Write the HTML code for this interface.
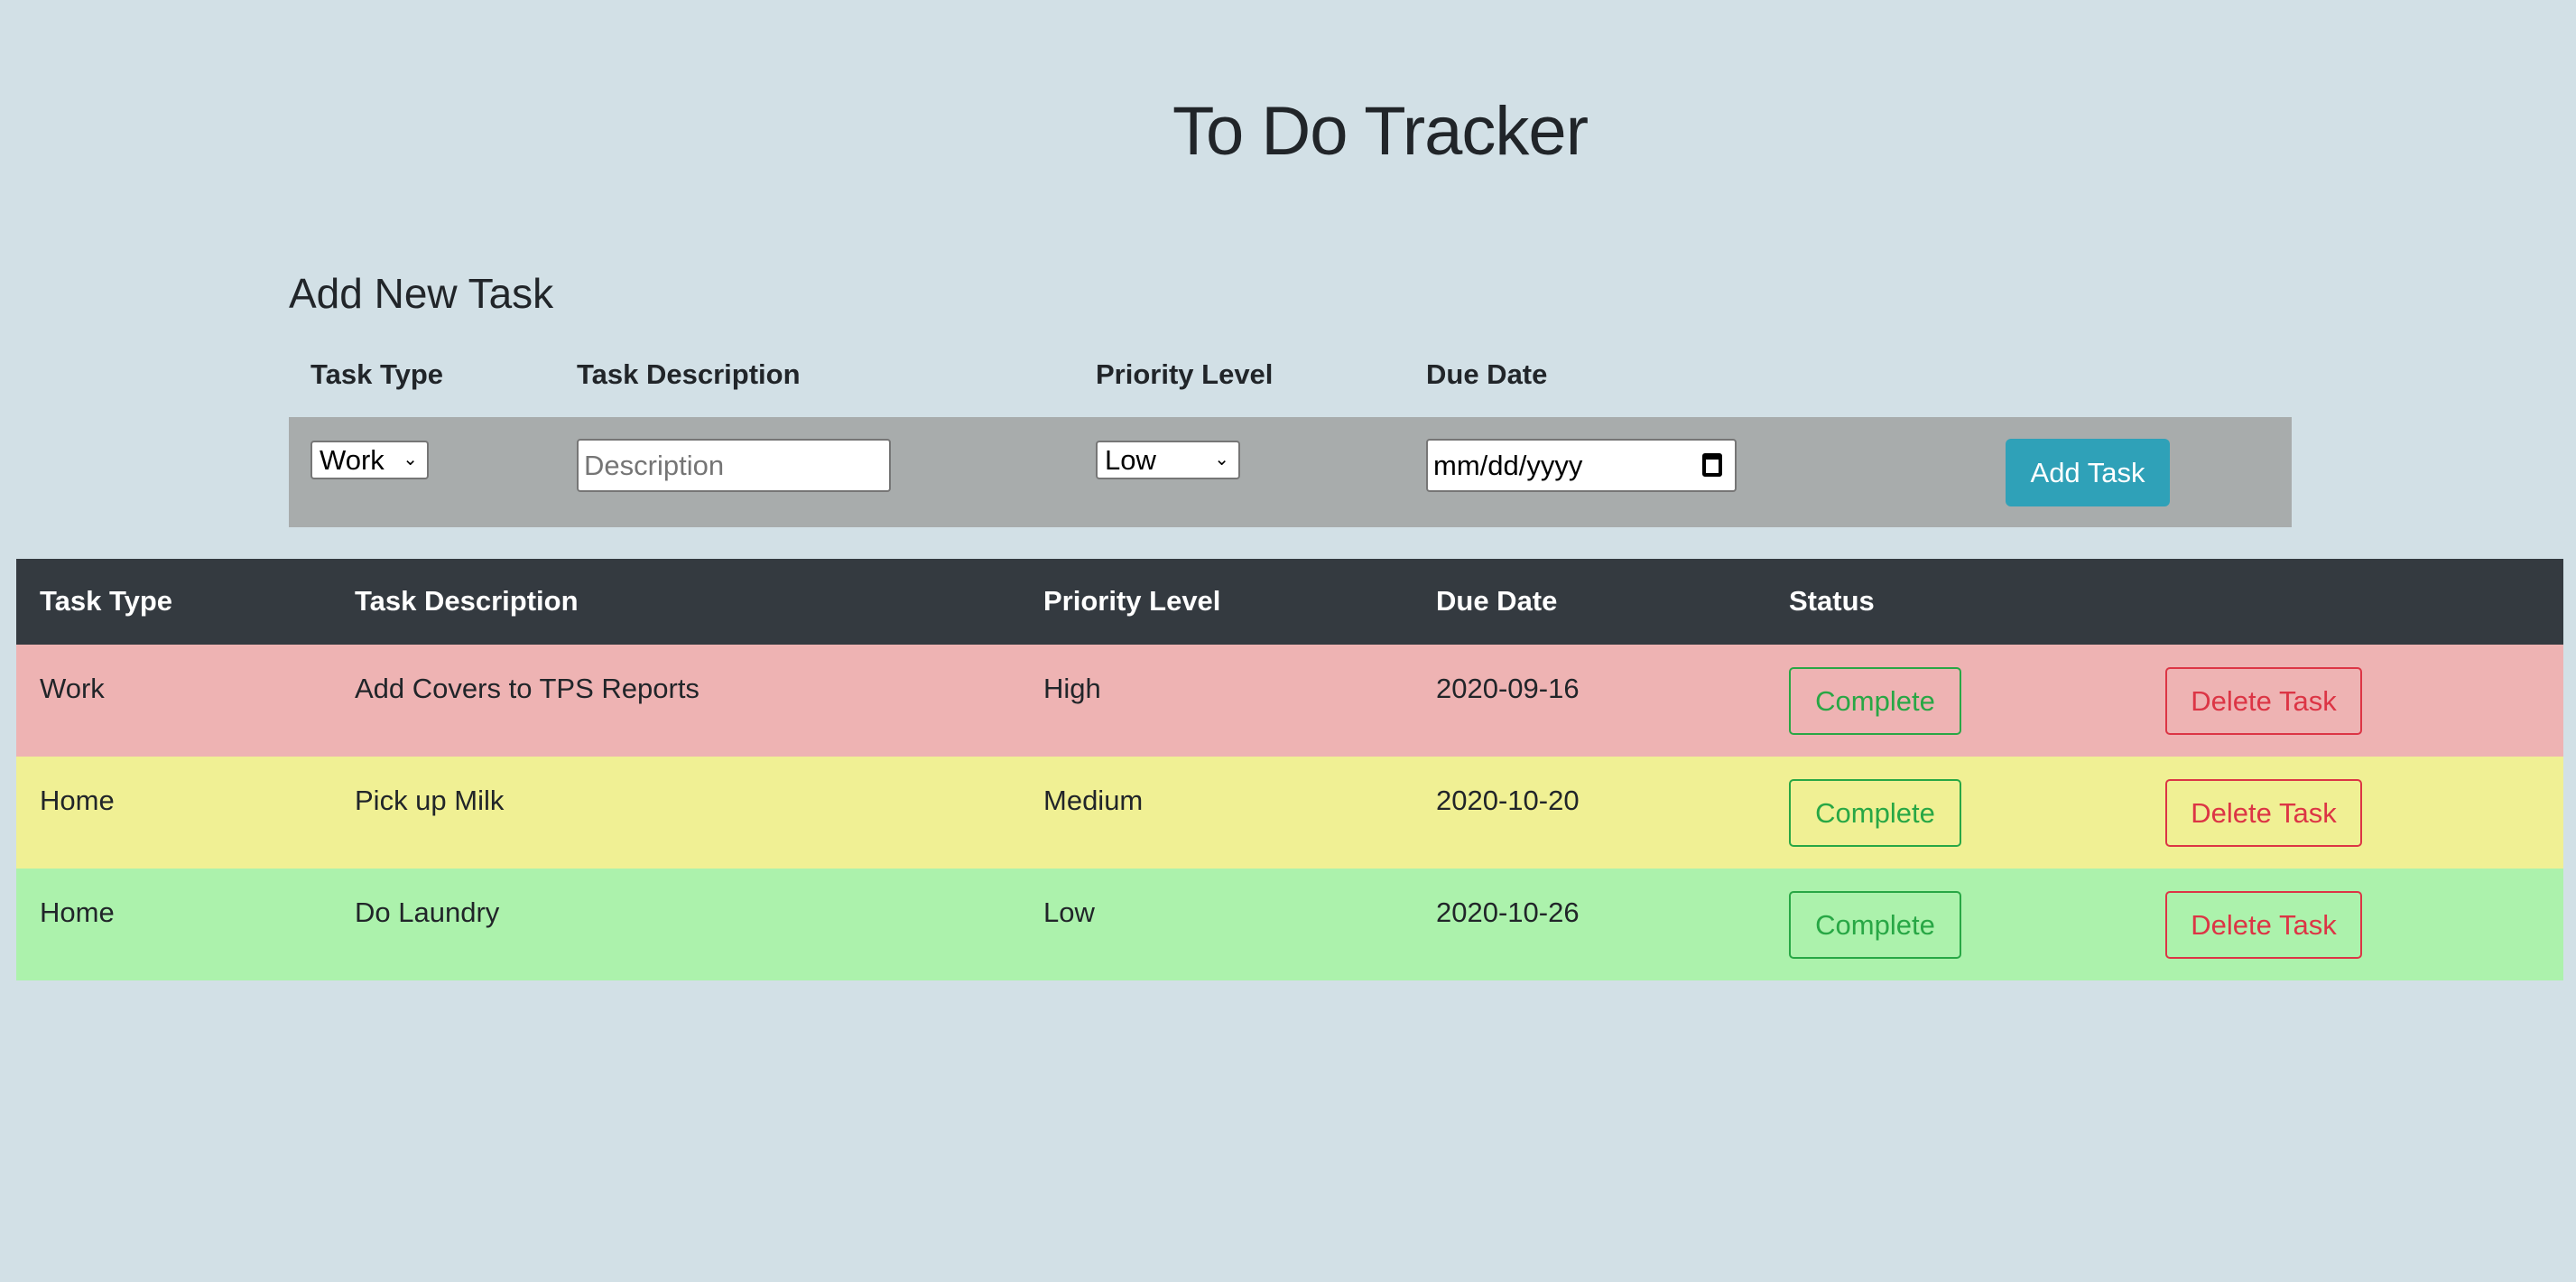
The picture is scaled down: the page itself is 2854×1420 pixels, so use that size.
<!DOCTYPE html>
<html><head><style>
body{margin:0;width:2854px;height:1420px;background:#d2e0e6;font-family:"Liberation Sans",sans-serif;color:#212529;position:relative;overflow:hidden}
.a{position:absolute;white-space:nowrap}
h1{position:absolute;margin:0;left:0;width:3058px;text-align:center;top:108px;font-size:76px;font-weight:400;line-height:1;letter-spacing:-1px}
.lbl{font-weight:700;font-size:31px;top:397px}
.bar{left:320px;top:462px;width:2219px;height:122px;background:#a8acac}
.ctl{background:#fff;border:2px solid #767676;border-radius:4px;box-sizing:border-box;font-size:31px;color:#000}
.thead{left:18px;top:619px;width:2822px;height:95px;background:#343a40}
.th{color:#fff;font-weight:700;font-size:31px;top:648px}
.row{left:18px;width:2822px;height:124px}
.td{font-size:31px}
.btn{border:2px solid;border-radius:5px;box-sizing:border-box;height:75px;font-size:31px;display:flex;align-items:center;justify-content:center}
.g{color:#28a745;border-color:#28a745;width:191px;left:1982px}
.r{color:#dc3545;border-color:#dc3545;width:218px;left:2399px}
</style></head><body>
<h1>To Do Tracker</h1>
<div class="a" style="left:320px;top:298px;font-size:46px">Add New Task</div>
<div class="a lbl" style="left:344px">Task Type</div>
<div class="a lbl" style="left:639px">Task Description</div>
<div class="a lbl" style="left:1214px">Priority Level</div>
<div class="a lbl" style="left:1580px">Due Date</div>
<div class="a bar"></div>
<div class="a ctl" style="left:344px;top:488px;width:131px;height:43px;padding:0 8px;line-height:39px">Work<span style="position:absolute;right:10px;font-size:20px">&#8964;</span></div>
<div class="a ctl" style="left:639px;top:486px;width:348px;height:59px;padding:0 6px;line-height:55px;color:#757575">Description</div>
<div class="a ctl" style="left:1214px;top:488px;width:160px;height:43px;padding:0 8px;line-height:39px">Low<span style="position:absolute;right:10px;font-size:20px">&#8964;</span></div>
<div class="a ctl" style="left:1580px;top:486px;width:344px;height:59px;padding:0 6px;line-height:55px">mm/dd/yyyy<span style="position:absolute;right:14px;top:14px;width:22px;height:26px;border:4px solid #000;border-top-width:7px;border-radius:3px;box-sizing:border-box"></span></div>
<div class="a" style="left:2222px;top:486px;width:182px;height:75px;background:#2fa1b8;border-radius:6px;color:#fff;font-size:31px;display:flex;align-items:center;justify-content:center">Add Task</div>
<div class="a thead"></div>
<div class="a th" style="left:44px">Task Type</div>
<div class="a th" style="left:393px">Task Description</div>
<div class="a th" style="left:1156px">Priority Level</div>
<div class="a th" style="left:1591px">Due Date</div>
<div class="a th" style="left:1982px">Status</div>

<div class="a row" style="top:714px;background:#eeb3b3"></div>
<div class="a td" style="left:44px;top:745px">Work</div>
<div class="a td" style="left:393px;top:745px">Add Covers to TPS Reports</div>
<div class="a td" style="left:1156px;top:745px">High</div>
<div class="a td" style="left:1591px;top:745px">2020-09-16</div>
<div class="a btn g" style="top:739px">Complete</div>
<div class="a btn r" style="top:739px">Delete Task</div>

<div class="a row" style="top:838px;background:#f0f094"></div>
<div class="a td" style="left:44px;top:869px">Home</div>
<div class="a td" style="left:393px;top:869px">Pick up Milk</div>
<div class="a td" style="left:1156px;top:869px">Medium</div>
<div class="a td" style="left:1591px;top:869px">2020-10-20</div>
<div class="a btn g" style="top:863px">Complete</div>
<div class="a btn r" style="top:863px">Delete Task</div>

<div class="a row" style="top:962px;background:#acf2ac"></div>
<div class="a td" style="left:44px;top:993px">Home</div>
<div class="a td" style="left:393px;top:993px">Do Laundry</div>
<div class="a td" style="left:1156px;top:993px">Low</div>
<div class="a td" style="left:1591px;top:993px">2020-10-26</div>
<div class="a btn g" style="top:987px">Complete</div>
<div class="a btn r" style="top:987px">Delete Task</div>
</body></html>
